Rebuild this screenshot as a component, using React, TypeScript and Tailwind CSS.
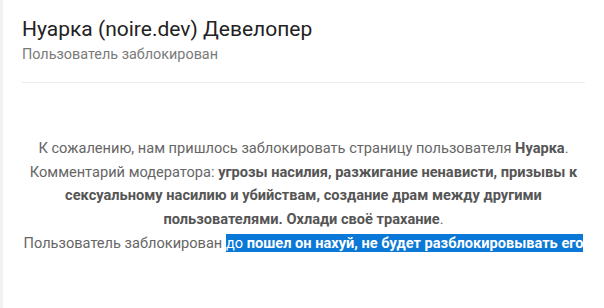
export default function App() {
  return (
    <div className="w-[604px] h-[308px] bg-white border-l-[3px] border-[#f1f1f1] overflow-hidden" style={{ fontFamily: "Roboto, 'Noto Sans', sans-serif" }}>
      <div className="pl-[19px] pr-[19px]">
        <div className="pt-[14px] pb-[18px] border-b border-[#ededed]">
          <h1 className="text-[21px] leading-[30px] text-[#222]">Нуарка (noire.dev) Девелопер</h1>
          <div className="text-[14.4px] leading-[18px] mt-[2px] text-[#7a7a7a]">Пользователь заблокирован</div>
        </div>
        <div className="pt-[54px] text-center text-[14.6px] leading-[23.7px] text-[#666]">
          <div>
            К сожалению, нам пришлось заблокировать страницу пользователя <b className="font-bold text-[#555]">Нуарка</b>.
          </div>
          <div>
            Комментарий модератора: <b className="font-bold text-[#555]">угрозы насилия, разжигание ненависти, призывы к сексуальному насилию и убийствам, создание драм между другими пользователями. Охлади своё трахание</b>.
          </div>
          <div className="whitespace-nowrap">
            Пользователь заблокирован <span className="bg-[#0a78d7] text-white">до <b className="font-bold">пошел он нахуй, не будет разблокировывать его</b></span>
          </div>
        </div>
      </div>
    </div>
  );
}
